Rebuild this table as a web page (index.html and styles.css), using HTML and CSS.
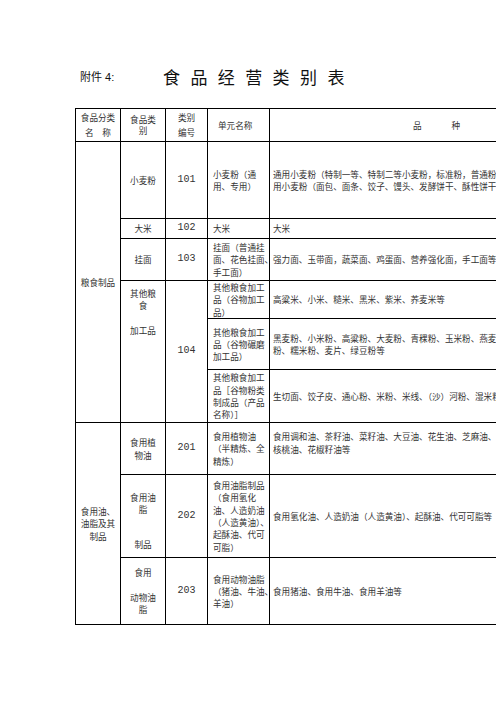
FILE: index.html
```html
<!DOCTYPE html>
<html lang="zh">
<head>
<meta charset="utf-8">
<title>食品经营类别表</title>
<link rel="stylesheet" href="styles.css">
</head>
<body>
<div class="page">
  <div class="head">
    <div class="label">附件 4:</div>
    <div class="title">食品经营类别表</div>
  </div>
  <table class="grid">
    <colgroup>
      <col class="w1"><col class="w2"><col class="w3"><col class="w4"><col class="w5">
    </colgroup>
    <tr class="h-head">
      <td class="c loose">食品分类<br>名　称</td>
      <td class="c tight">食品类<br>别</td>
      <td class="c loose">类别<br>编号</td>
      <td class="l4 unit-head">单元名称</td>
      <td class="c"><span>品</span><span class="gap">种</span></td>
    </tr>
    <tr class="h77">
      <td class="c" rowspan="6">粮食制品</td>
      <td class="c">小麦粉</td>
      <td class="num">101</td>
      <td class="l4">小麦粉（通<br>用、专用）</td>
      <td class="l5">通用小麦粉（特制一等、特制二等小麦粉，标准粉，普通粉）、专<br>用小麦粉（面包、面条、饺子、馒头、发酵饼干、酥性饼干、蛋糕）等</td>
    </tr>
    <tr class="h20">
      <td class="c">大米</td>
      <td class="num">102</td>
      <td class="l4">大米</td>
      <td class="l5">大米</td>
    </tr>
    <tr class="h42">
      <td class="c">挂面</td>
      <td class="num">103</td>
      <td class="l4">挂面（普通挂<br>面、花色挂面、<br>手工面）</td>
      <td class="l5">强力面、玉带面，蔬菜面、鸡蛋面、营养强化面，手工面等</td>
    </tr>
    <tr class="h38">
      <td class="c top" rowspan="3">其他粮<br>食<br><br>加工品</td>
      <td class="num" rowspan="3">104</td>
      <td class="l4">其他粮食加工<br>品（谷物加工<br>品）</td>
      <td class="l5">高粱米、小米、糙米、黑米、紫米、荞麦米等</td>
    </tr>
    <tr class="h51">
      <td class="l4">其他粮食加工<br>品（谷物碾磨<br>加工品）</td>
      <td class="l5">黑麦粉、小米粉、高粱粉、大麦粉、青稞粉、玉米粉、燕麦<br>粉、糯米粉、麦片、绿豆粉等</td>
    </tr>
    <tr class="h53">
      <td class="l4">其他粮食加工<br>品［谷物粉类<br>制成品（产品<br>名称）］</td>
      <td class="l5">生切面、饺子皮、通心粉、米粉、米线、（沙）河粉、湿米粉等</td>
    </tr>
    <tr class="h52">
      <td class="c" rowspan="3">食用油、<br>油脂及其<br>制品</td>
      <td class="c">食用植<br>物油</td>
      <td class="num">201</td>
      <td class="l4">食用植物油<br>（半精炼、全<br>精炼）</td>
      <td class="l5 lift">食用调和油、茶籽油、菜籽油、大豆油、花生油、芝麻油、<br>核桃油、花椒籽油等</td>
    </tr>
    <tr class="h83">
      <td class="c top2">食用油<br>脂<br><br><br>制品</td>
      <td class="num">202</td>
      <td class="l4">食用油脂制品<br>（食用氢化<br>油、人造奶油<br>（人造黄油）、<br>起酥油、代可<br>可脂）</td>
      <td class="l5">食用氢化油、人造奶油（人造黄油）、起酥油、代可可脂等</td>
    </tr>
    <tr class="h67">
      <td class="c">食用<br><br>动物油<br>脂</td>
      <td class="num">203</td>
      <td class="l4">食用动物油脂<br>（猪油、牛油、<br>羊油）</td>
      <td class="l5">食用猪油、食用牛油、食用羊油等</td>
    </tr>
  </table>
</div>
</body>
</html>
```
FILE: styles.css
```css
html, body {
  margin: 0;
  padding: 0;
  background: #fff;
  overflow: hidden;
}
body {
  font-family: "Noto Sans CJK SC", "Noto Sans", sans-serif;
  color: #333;
}
.page {
  width: 700px;
}
.head {
  display: flex;
  align-items: center;
  height: 20px;
  padding-top: 66px;
  padding-left: 80px;
}
.label {
  width: 83px;
  font-family: "Liberation Sans", "Noto Sans CJK SC", sans-serif;
  font-size: 11px;
  color: #111;
}
.title {
  font-size: 17px;
  letter-spacing: 10.4px;
  color: #111;
}
.grid {
  margin-top: 22px;
  margin-left: 75px;
  border-collapse: collapse;
  table-layout: fixed;
  width: 528px;
  font-size: 8.6px;
  line-height: 12.3px;
}
.w1 { width: 45px; }
.w2 { width: 45px; }
.w3 { width: 42px; }
.w4 { width: 62px; }
.w5 { width: 334px; }
.grid td {
  border: 1px solid #000;
  padding: 0;
  vertical-align: middle;
  white-space: nowrap;
  overflow: visible;
}
.c { text-align: center; }
.num {
  text-align: center;
  font-family: "Liberation Mono", monospace;
  font-size: 10px;
  color: #333;
}
.l4 { padding-left: 5px !important; text-align: left; }
.l5 { padding-left: 3px !important; text-align: left; }
.loose { line-height: 15.5px; }
.tight { line-height: 11px; }
.unit-head { padding-left: 10px !important; }
.gap { margin-left: 30px; }
.top { vertical-align: top !important; padding-top: 6px !important; }
.top2 { vertical-align: top !important; padding-top: 17px !important; line-height: 11.8px; }
.lift { padding-bottom: 12px !important; }
.h-head td { height: 32px; }
.h77 td { height: 76px; }
.h20 td { height: 19px; }
.h42 td { height: 41px; }
.h38 td { height: 37px; }
.h51 td { height: 50px; }
.h53 td { height: 52px; }
.h52 td { height: 51px; }
.h52 td.lift { height: 39px; }
.h83 td { height: 82px; }
.h83 td.top2 { height: 65px; }
.h67 td { height: 66px; }
```
